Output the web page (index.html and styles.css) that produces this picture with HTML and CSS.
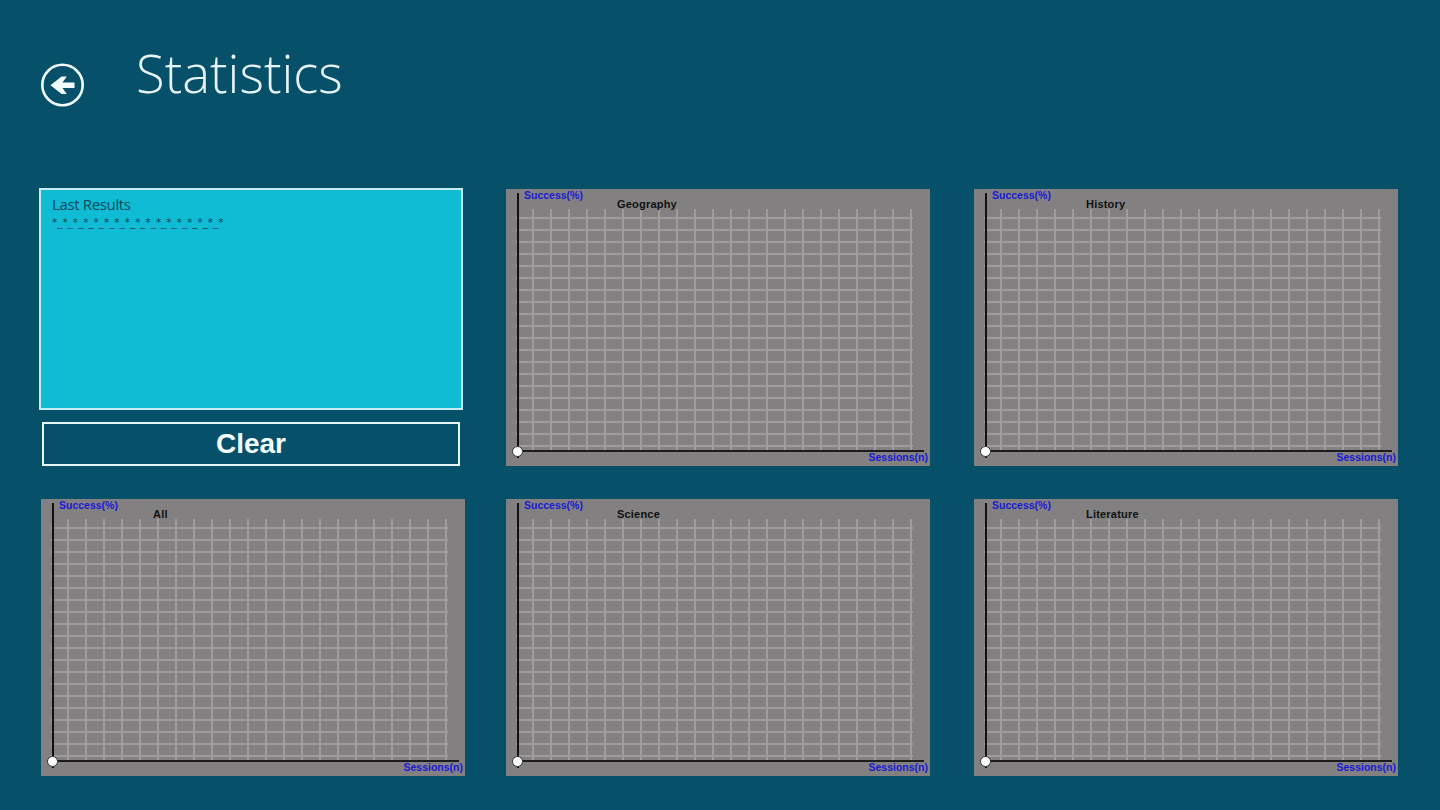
FILE: index.html
```html
<!DOCTYPE html>
<html lang="en">
<head>
<meta charset="utf-8">
<title>Statistics</title>
<link rel="stylesheet" href="styles.css">
</head>
<body>
<header class="page-header">
  <button class="back" type="button" aria-label="Back">
    <svg class="back-icon" viewBox="0 0 44 44" aria-hidden="true">
      <circle cx="21.5" cy="22" r="20.2" fill="none" stroke="#f2fbfd" stroke-width="2.6"/>
      <path d="M33.5 19.4H21.5L25.8 13.5h-5.2L9.5 22.3l11.1 8.7h5.2l-4.3-5.9h12z" fill="#f2fbfd"/>
    </svg>
  </button>
  <h1 class="title">Statistics</h1>
</header>
<main class="board">
  <section class="results-cell">
    <div class="results">
      <div class="results-title">Last Results</div>
      <div class="results-line">*_*_*_*_*_*_*_*_*_*_*_*_*_*_*_*_*</div>
    </div>
    <button class="clear" type="button">Clear</button>
  </section>
  <figure class="chart">
    <div class="plot"></div><div class="axis-y"></div><div class="axis-x"></div><div class="origin"></div>
    <span class="label-y">Success(%)</span><span class="label-x">Sessions(n)</span>
    <figcaption class="chart-title chart-title-geo">Geography</figcaption>
  </figure>
  <figure class="chart">
    <div class="plot"></div><div class="axis-y"></div><div class="axis-x"></div><div class="origin"></div>
    <span class="label-y">Success(%)</span><span class="label-x">Sessions(n)</span>
    <figcaption class="chart-title chart-title-his">History</figcaption>
  </figure>
  <figure class="chart">
    <div class="plot"></div><div class="axis-y"></div><div class="axis-x"></div><div class="origin"></div>
    <span class="label-y">Success(%)</span><span class="label-x">Sessions(n)</span>
    <figcaption class="chart-title chart-title-all">All</figcaption>
  </figure>
  <figure class="chart">
    <div class="plot"></div><div class="axis-y"></div><div class="axis-x"></div><div class="origin"></div>
    <span class="label-y">Success(%)</span><span class="label-x">Sessions(n)</span>
    <figcaption class="chart-title chart-title-sci">Science</figcaption>
  </figure>
  <figure class="chart">
    <div class="plot"></div><div class="axis-y"></div><div class="axis-x"></div><div class="origin"></div>
    <span class="label-y">Success(%)</span><span class="label-x">Sessions(n)</span>
    <figcaption class="chart-title chart-title-his">Literature</figcaption>
  </figure>
</main>
</body>
</html>
```
FILE: styles.css
```css
* { box-sizing: border-box; }
html, body { margin: 0; height: 810px; overflow: hidden; }
body { background: #07506a; color: #fff; font-family: "Open Sans", "Liberation Sans", sans-serif; }

.page-header { display: flex; height: 189px; padding-left: 41px; align-items: flex-start; }
.back { width: 44px; height: 44px; margin-top: 63px; padding: 0; border: 0; background: none; flex: none; }
.back-icon { display: block; width: 44px; height: 44px; }
.title { margin: 35px 0 0 51px; font-size: 52.5px; line-height: 76px; font-weight: 300; color: #e8f4f7; }

.board { display: grid; grid-template-columns: 465px 468px 424px; grid-template-rows: 277px 277px; row-gap: 33px; padding-left: 41px; }

.results-cell { display: flex; flex-direction: column; margin: -1px 0 0 -2px; }
.results { width: 424px; height: 222px; padding: 4px 11px; background: #10bcd4; border: 2px solid #c4ecf2; color: #07465c; }
.results-title { font-size: 15px; line-height: 21px; letter-spacing: -.35px; }
.results-line { font: 10.4px/14px "DejaVu Sans", sans-serif; }
.clear { width: 418px; height: 44px; margin: 12px 0 0 3px; padding: 0; background: #07506a; border: 2px solid #e6f6f9; color: #f4fcfd; font: 700 28px/38px "Liberation Sans", Arial, sans-serif; }

.chart { position: relative; width: 424px; height: 277px; margin: 0; background: #828080; }
.plot { position: absolute; left: 10px; top: 20px; width: 397px; height: 242px;
  background-image:
    repeating-linear-gradient(90deg, transparent 0 16px, #a09c9c 16px 18px),
    repeating-linear-gradient(180deg, transparent 0 8px, #a09c9c 8px 10px, transparent 10px 12px); }
.axis-y { position: absolute; left: 11px; top: 4px; width: 2px; height: 265px; background: #111; }
.axis-x { position: absolute; left: 6px; top: 261px; width: 412px; height: 2px; background: #1c1c1c; }
.origin { position: absolute; left: 6px; top: 257px; width: 11px; height: 11px; border-radius: 50%; background: #fff; border: 1px solid #333; }
.label-y, .label-x { position: absolute; color: #1a1ad8; font: 700 10.5px/13px "Liberation Sans", Arial, sans-serif; }
.label-y { left: 18px; top: 0; }
.label-x { right: 2px; bottom: 2px; }
.chart-title { position: absolute; top: 9px; color: #111; font: 700 11px/13px "Liberation Sans", Arial, sans-serif; letter-spacing: .2px; }
.chart-title-geo { left: 111px; }
.chart-title-his { left: 112px; }
.chart-title-all { left: 112px; }
.chart-title-sci { left: 111px; }
```
